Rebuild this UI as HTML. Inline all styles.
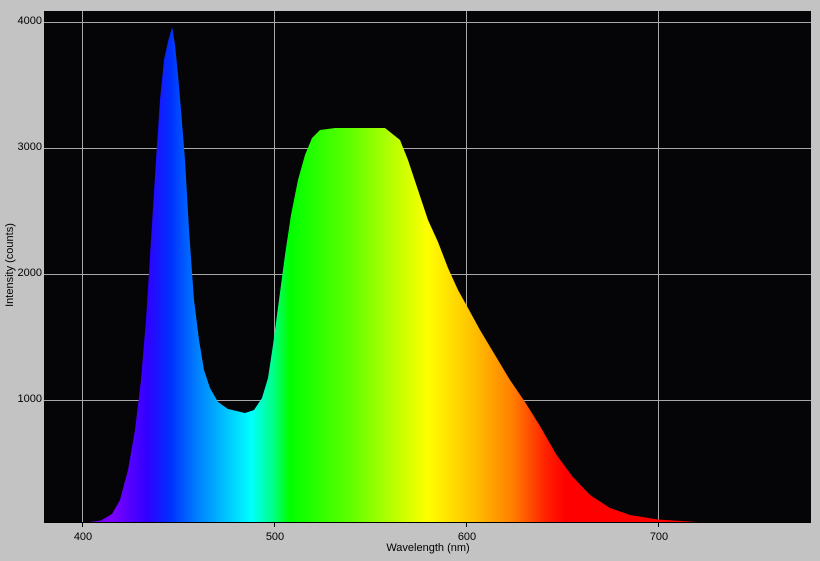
<!DOCTYPE html>
<html><head><style>
html,body{margin:0;padding:0;}
body{width:820px;height:561px;background:#c3c3c3;position:relative;overflow:hidden;font-family:"Liberation Sans",sans-serif;font-size:11px;color:#000;}
.yl{position:absolute;right:778px;font-size:11px;line-height:11px;}
.xl{position:absolute;top:531px;width:40px;text-align:center;font-size:11px;}
</style></head><body>
<svg width="820" height="561" style="position:absolute;left:0;top:0">
<defs>
<linearGradient id="g" x1="44" x2="811" y1="0" y2="0" gradientUnits="userSpaceOnUse">
<stop offset="0" stop-color="#7000ff"/>
<stop offset="0.09" stop-color="#7a00ff"/>
<stop offset="0.135" stop-color="#3000ff"/>
<stop offset="0.165" stop-color="#0030ff"/>
<stop offset="0.20" stop-color="#0080ff"/>
<stop offset="0.27" stop-color="#00ffff"/>
<stop offset="0.30" stop-color="#00ff80"/>
<stop offset="0.32" stop-color="#00ff00"/>
<stop offset="0.40" stop-color="#60ff00"/>
<stop offset="0.46" stop-color="#c0ff00"/>
<stop offset="0.50" stop-color="#ffff00"/>
<stop offset="0.56" stop-color="#ffc000"/>
<stop offset="0.61" stop-color="#ff8000"/>
<stop offset="0.655" stop-color="#ff2000"/>
<stop offset="0.68" stop-color="#ff0000"/>
<stop offset="1" stop-color="#ff0000"/>
</linearGradient>
</defs>
<rect x="44" y="11" width="767" height="512" fill="#050407"/>
<g stroke="#a8a8a8" stroke-width="1">
<line x1="82.5" y1="11" x2="82.5" y2="523"/>
<line x1="274.5" y1="11" x2="274.5" y2="523"/>
<line x1="466.5" y1="11" x2="466.5" y2="523"/>
<line x1="658.5" y1="11" x2="658.5" y2="523"/>
<line x1="44" y1="22.5" x2="811" y2="22.5"/>
<line x1="44" y1="148.5" x2="811" y2="148.5"/>
<line x1="44" y1="274.5" x2="811" y2="274.5"/>
<line x1="44" y1="400.5" x2="811" y2="400.5"/>
</g>
<polygon fill="url(#g)" points="82,523 101,520.5 112,514 120,500 128,470 135,430 141,380 146,320 151,240 156,160 160,100 164,60 168.4,40 172.2,27 175,45 178,75 181,110 185,160 189,230 194,300 199,340 204,370 210,388 218,402 228,409 245,413 254,410 262,398 268,378 273,345 279,300 285,255 291,215 298,180 305,155 312,138 320,130 335,128 385,128 400,140 408,160 418,190 428,220 438,242 448,268 458,290 468,308 480,330 495,355 510,380 525,402 540,426 556,454 572,476 590,495 610,508 630,515 658,519.5 696.4,522 734.8,523"/>
<line x1="44" y1="522.5" x2="811" y2="522.5" stroke="#000" stroke-width="1"/>
<g stroke="#000"><line x1="82.5" y1="523" x2="82.5" y2="527"/><line x1="274.5" y1="523" x2="274.5" y2="527"/><line x1="466.5" y1="523" x2="466.5" y2="527"/><line x1="658.5" y1="523" x2="658.5" y2="527"/></g>
<text x="13" y="265" transform="rotate(-90 13 265)" text-anchor="middle" font-family="Liberation Sans" font-size="11">Intensity (counts)</text>
</svg>
<div class="yl" style="top:16px">4000</div>
<div class="yl" style="top:142px">3000</div>
<div class="yl" style="top:268px">2000</div>
<div class="yl" style="top:394px">1000</div>
<div class="xl" style="left:63px">400</div>
<div class="xl" style="left:255px">500</div>
<div class="xl" style="left:447px">600</div>
<div class="xl" style="left:639px">700</div>
<div style="position:absolute;left:328px;top:542px;width:200px;text-align:center;font-size:11px">Wavelength (nm)</div>
</body></html>
